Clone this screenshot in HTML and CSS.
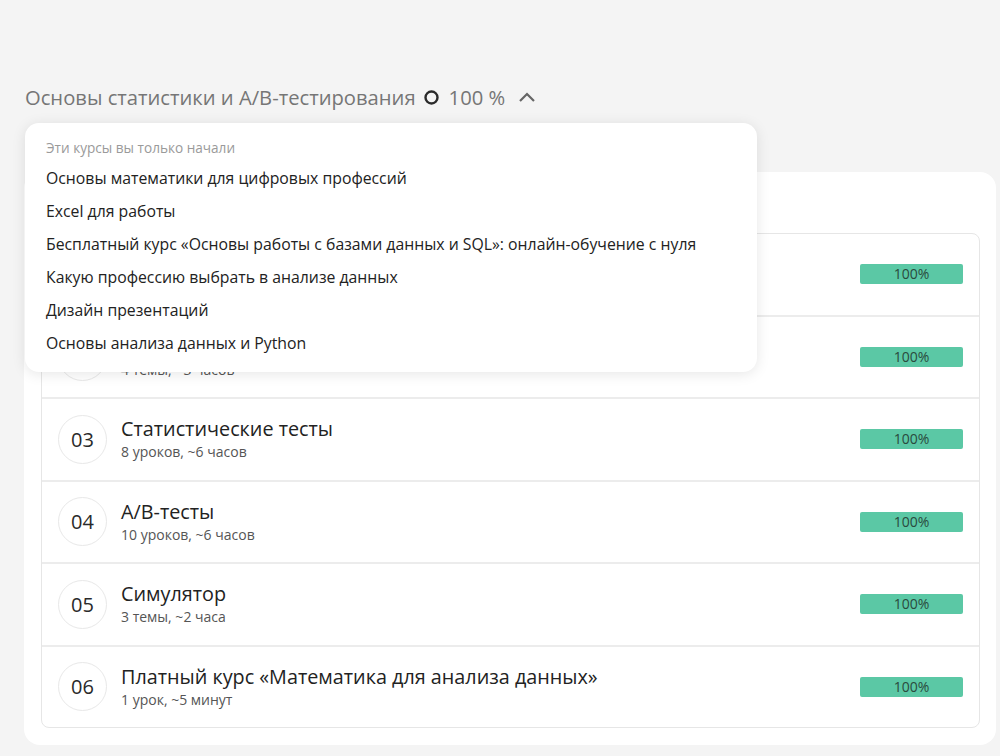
FILE: index.html
```html
<!DOCTYPE html>
<html lang="ru">

<head>
    <meta charset="UTF-8">
    <meta name="viewport" content="width=device-width, initial-scale=1.0">
    <title>Основы статистики и A/B-тестирования</title>
    <link rel="stylesheet" href="styles.css">
</head>

<body>
    <div class="page">
        <div class="course-head">
            <div class="course-title">
                <span>Основы статистики и A/B-тестирования</span>
                <svg class="ring" width="15" height="15" viewBox="0 0 15 15">
                    <circle cx="7.5" cy="7.5" r="6" fill="none" stroke="#2b2b2b" stroke-width="2.4" />
                </svg>
                <span class="course-percent">100 %</span>
                <svg class="chevron" width="18" height="12" viewBox="0 0 18 12">
                    <path d="M2 10 L9 3 L16 10" fill="none" stroke="#666" stroke-width="2.2" />
                </svg>
            </div>

            <div class="started-menu">
                <div class="started-label">Эти курсы вы только начали</div>
                <ul class="started-list">
                    <li>Основы математики для цифровых профессий</li>
                    <li>Excel для работы</li>
                    <li>Бесплатный курс «Основы работы с базами данных и SQL»: онлайн-обучение с нуля</li>
                    <li>Какую профессию выбрать в анализе данных</li>
                    <li>Дизайн презентаций</li>
                    <li>Основы анализа данных и Python</li>
                </ul>
            </div>
        </div>

        <div class="card">
            <div class="modules">
                <div class="module">
                    <div class="module-num">01</div>
                    <div class="module-info">
                        <div class="module-name">Описательная статистика</div>
                        <div class="module-meta">5 уроков, ~4 часа</div>
                    </div>
                    <div class="module-progress">100%</div>
                </div>
                <div class="module">
                    <div class="module-num">02</div>
                    <div class="module-info">
                        <div class="module-name">Теория вероятностей</div>
                        <div class="module-meta">4 темы, ~3 часов</div>
                    </div>
                    <div class="module-progress">100%</div>
                </div>
                <div class="module">
                    <div class="module-num">03</div>
                    <div class="module-info">
                        <div class="module-name">Статистические тесты</div>
                        <div class="module-meta">8 уроков, ~6 часов</div>
                    </div>
                    <div class="module-progress">100%</div>
                </div>
                <div class="module">
                    <div class="module-num">04</div>
                    <div class="module-info">
                        <div class="module-name">A/B-тесты</div>
                        <div class="module-meta">10 уроков, ~6 часов</div>
                    </div>
                    <div class="module-progress">100%</div>
                </div>
                <div class="module">
                    <div class="module-num">05</div>
                    <div class="module-info">
                        <div class="module-name">Симулятор</div>
                        <div class="module-meta">3 темы, ~2 часа</div>
                    </div>
                    <div class="module-progress">100%</div>
                </div>
                <div class="module">
                    <div class="module-num">06</div>
                    <div class="module-info">
                        <div class="module-name">Платный курс «Математика для анализа данных»</div>
                        <div class="module-meta">1 урок, ~5 минут</div>
                    </div>
                    <div class="module-progress">100%</div>
                </div>
            </div>
        </div>
    </div>
</body>

</html>
```

FILE: styles.css
```css
body {
    margin: 0;
    font-family: 'Open Sans', 'Noto Sans', sans-serif;
    background: #f4f4f4;
    color: #222;
}

.page {
    padding: 85px 4px 11px 24px;
}

.course-head {
    position: relative;
}

.course-title {
    display: flex;
    align-items: center;
    height: 24px;
    padding-left: 1px;
    font-size: 20.2px;
    color: #767676;
}

.ring {
    margin: 0 10px 0 8px;
}

.chevron {
    margin-left: 13px;
}

.started-menu {
    position: absolute;
    top: 38px;
    left: 1px;
    width: 690px;
    padding: 15px 21px 12px 21px;
    background: #fff;
    border-radius: 14px;
    box-shadow: 0 2px 14px rgba(0, 0, 0, 0.1);
    z-index: 2;
}

.started-label {
    font-size: 13.6px;
    line-height: 20px;
    color: #9a9a9a;
}

.started-list {
    list-style: none;
    margin: 4px 0 0 0;
    padding: 0;
}

.started-list li {
    font-size: 15.8px;
    line-height: 33px;
    color: #222;
}

.card {
    margin-top: 63px;
    background: #fff;
    border-radius: 16px;
    padding: 61px 16px 17px 17px;
}

.modules {
    border: 1px solid #e6e6e6;
    border-radius: 8px;
}

.module {
    display: flex;
    align-items: center;
    height: 80.5px;
    padding: 0 16px;
    border-bottom: 2px solid #ececec;
}

.module:last-child {
    border-bottom: none;
}

.module-num {
    width: 47px;
    height: 47px;
    border: 1px solid #e8e8e8;
    border-radius: 50%;
    display: flex;
    align-items: center;
    justify-content: center;
    font-size: 20px;
    color: #2a2a2a;
    flex-shrink: 0;
}

.module-info {
    flex: 1;
    margin-left: 14px;
}

.module-name {
    font-size: 19.8px;
    line-height: 26px;
    color: #222;
}

.module-meta {
    font-size: 14px;
    line-height: 20px;
    color: #555;
}

.module-progress {
    width: 103px;
    height: 20px;
    line-height: 20px;
    text-align: center;
    background: #5bc8a5;
    border-radius: 2px;
    font-size: 14px;
    color: #2a4a3d;
}
```
